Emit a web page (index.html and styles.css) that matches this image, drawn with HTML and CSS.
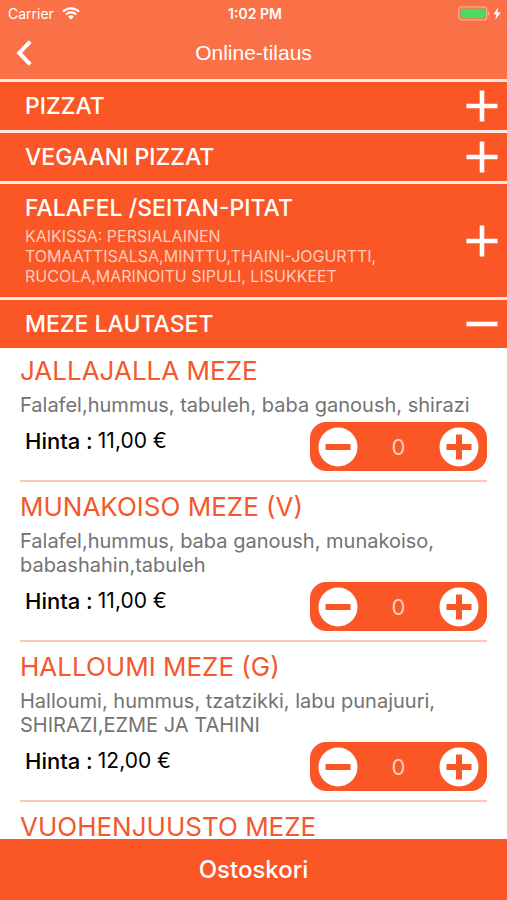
FILE: index.html
```html
<!DOCTYPE html>
<html lang="fi">
<head>
<meta charset="utf-8">
<meta name="viewport" content="width=device-width, initial-scale=1">
<title>Online-tilaus</title>
<link rel="stylesheet" href="styles.css">
</head>
<body>
<svg class="defs" aria-hidden="true">
  <symbol id="minus" viewBox="0 0 40 40"><circle cx="20" cy="20" r="19.5" fill="#fff"/><path d="M7.5 20h25" stroke="#fa5626" stroke-width="6"/></symbol>
  <symbol id="plus" viewBox="0 0 40 40"><circle cx="20" cy="20" r="19.5" fill="#fff"/><path d="M7.5 20h25M20 7.5v25" stroke="#fa5626" stroke-width="6"/></symbol>
  <symbol id="expand" viewBox="0 0 32 32"><path d="M.5 16h31M16 .5v31" stroke="#fff" stroke-width="4.6"/></symbol>
  <symbol id="collapse" viewBox="0 0 32 32"><path d="M.5 16h31" stroke="#fff" stroke-width="4.6"/></symbol>
</svg>
<header class="top">
  <div class="status">
    <div class="carrier">Carrier
      <svg class="wifi" viewBox="0 0 18 13" aria-hidden="true"><g fill="none" stroke="#fff" stroke-width="2.1"><path d="M1 4.6a11.5 11.5 0 0 1 16 0"/><path d="M3.8 7.5a7.5 7.5 0 0 1 10.4 0"/></g><path d="M9 12.6 6.1 9.7a4.2 4.2 0 0 1 5.8 0z" fill="#fff"/></svg>
    </div>
    <div class="clock">1:02 PM</div>
    <div class="power">
      <svg class="battery" viewBox="0 0 44 15" aria-hidden="true"><rect x=".7" y="1" width="28" height="13" rx="3" fill="none" stroke="#fcb59d" stroke-width="1.2"/><rect x="2.6" y="2.8" width="24.6" height="9.4" rx="1.4" fill="#4cd964"/><path d="M30.4 5.2c1.9.7 1.9 3.9 0 4.6z" fill="#fcb59d"/><path d="M40.2 1.6 35.4 8.3h3l-1.2 5.4L42.8 6.6h-3.4z" fill="#fff"/></svg>
    </div>
  </div>
  <nav class="nav">
    <button class="back" type="button" aria-label="Takaisin"><svg viewBox="0 0 16 26" aria-hidden="true"><path d="M14.2 1.6 3.2 13l11 11.4" fill="none" stroke="#fff" stroke-width="4"/></svg></button>
    <h1 class="title">Online-tilaus</h1>
  </nav>
</header>
<main class="menu">
  <button class="category" type="button"><span class="label"><span class="name">PIZZAT</span></span><svg class="toggle" aria-hidden="true"><use href="#expand"/></svg></button>
  <button class="category" type="button"><span class="label"><span class="name">VEGAANI PIZZAT</span></span><svg class="toggle" aria-hidden="true"><use href="#expand"/></svg></button>
  <button class="category" type="button"><span class="label"><span class="name">FALAFEL /SEITAN-PITAT</span><span class="note">KAIKISSA: PERSIALAINEN TOMAATTISALSA,MINTTU,THAINI-JOGURTTI, RUCOLA,MARINOITU SIPULI, LISUKKEET</span></span><svg class="toggle" aria-hidden="true"><use href="#expand"/></svg></button>
  <button class="category" type="button" aria-expanded="true"><span class="label"><span class="name">MEZE LAUTASET</span></span><svg class="toggle" aria-hidden="true"><use href="#collapse"/></svg></button>
  <section class="dishes">
    <article class="dish">
      <h2 class="dish-name">JALLAJALLA MEZE</h2>
      <p class="desc">Falafel,hummus, tabuleh, baba ganoush, shirazi</p>
      <div class="order">
        <p class="price"><span class="price-label">Hinta :</span><span>11,00 €</span></p>
        <div class="stepper"><button type="button" aria-label="Vähennä"><svg aria-hidden="true"><use href="#minus"/></svg></button><output>0</output><button type="button" aria-label="Lisää"><svg aria-hidden="true"><use href="#plus"/></svg></button></div>
      </div>
    </article>
    <article class="dish">
      <h2 class="dish-name">MUNAKOISO MEZE (V)</h2>
      <p class="desc">Falafel,hummus, baba ganoush, munakoiso, babashahin,tabuleh</p>
      <div class="order">
        <p class="price"><span class="price-label">Hinta :</span><span>11,00 €</span></p>
        <div class="stepper"><button type="button" aria-label="Vähennä"><svg aria-hidden="true"><use href="#minus"/></svg></button><output>0</output><button type="button" aria-label="Lisää"><svg aria-hidden="true"><use href="#plus"/></svg></button></div>
      </div>
    </article>
    <article class="dish">
      <h2 class="dish-name">HALLOUMI MEZE (G)</h2>
      <p class="desc">Halloumi, hummus, tzatzikki, labu punajuuri, SHIRAZI,EZME JA TAHINI</p>
      <div class="order">
        <p class="price"><span class="price-label">Hinta :</span><span>12,00 €</span></p>
        <div class="stepper"><button type="button" aria-label="Vähennä"><svg aria-hidden="true"><use href="#minus"/></svg></button><output>0</output><button type="button" aria-label="Lisää"><svg aria-hidden="true"><use href="#plus"/></svg></button></div>
      </div>
    </article>
    <article class="dish">
      <h2 class="dish-name">VUOHENJUUSTO MEZE</h2>
    </article>
  </section>
</main>
<button class="cart" type="button">Ostoskori</button>
</body>
</html>
```
FILE: styles.css
```css
* {
  box-sizing: border-box;
}

body {
  margin: 0;
  height: 100vh;
  display: flex;
  flex-direction: column;
  background: #fff;
  font-family: Inter, "Liberation Sans", sans-serif;
  overflow: hidden;
}

button {
  margin: 0;
  padding: 0;
  border: 0;
  background: none;
  color: inherit;
  font: inherit;
}

svg {
  display: block;
}

h1, h2, p {
  margin: 0;
  font-weight: 400;
}

.defs {
  position: absolute;
  width: 0;
  height: 0;
}

.top {
  flex: none;
  background: #fb7147;
  color: #fff;
}

.status {
  display: grid;
  grid-template-columns: 1fr auto 1fr;
  align-items: center;
  height: 26px;
  padding: 1px 5px 0 8px;
  font-size: 14px;
}

.carrier {
  display: flex;
  align-items: center;
  gap: 8px;
}

.wifi {
  width: 18px;
  height: 13px;
}

.clock {
  font-weight: 600;
}

.power {
  display: flex;
  justify-content: flex-end;
}

.battery {
  width: 44px;
  height: 15px;
}

.nav {
  display: grid;
  grid-template-columns: 48px 1fr 48px;
  align-items: center;
  height: 53px;
}

.back {
  width: 16px;
  height: 26px;
  margin-left: 16px;
}

.title {
  font-family: "Liberation Sans", sans-serif;
  font-size: 21px;
  text-align: center;
}

.menu {
  flex: 1;
  min-height: 0;
  overflow: hidden;
}

.category {
  display: flex;
  align-items: center;
  width: 100%;
  padding: 9px 9px 9px 25px;
  border-top: 3px solid #ffe9e1;
  background: #fa5626;
  color: #fff;
  text-align: left;
}

.label {
  flex: 1;
  display: flex;
  flex-direction: column;
}

.name {
  font-size: 23px;
  font-weight: 500;
  line-height: 30px;
}

.note {
  max-width: 370px;
  padding: 3px 0 2px;
  color: #fdcdbc;
  font-size: 16px;
  line-height: 20px;
}

.toggle {
  width: 32px;
  height: 32px;
  margin: -1px 0;
}

.dishes {
  padding: 0 20px;
}

.dish {
  padding: 13px 0 9px;
  border-bottom: 2px solid #fdc8b8;
}

.dish:first-child {
  padding-top: 11px;
}

.dish-name {
  color: #f4582c;
  font-size: 26px;
  line-height: 24px;
}

.desc {
  padding-top: 10px;
  color: #737373;
  font-size: 20px;
  line-height: 24px;
}

.order {
  display: flex;
  justify-content: space-between;
  margin-top: 5px;
}

.price {
  display: flex;
  gap: 5px;
  padding: 6px 0 0 5px;
  color: #000;
  font-size: 21px;
  line-height: 26px;
}

.price-label {
  font-size: 22px;
  font-weight: 500;
}

.stepper {
  display: flex;
  align-items: center;
  justify-content: space-between;
  width: 177px;
  height: 49px;
  padding: 0 8px;
  border-radius: 16px;
  background: #fa5626;
  color: #fdcdbc;
  font-size: 22px;
}

.stepper svg {
  width: 40px;
  height: 40px;
}

.cart {
  flex: none;
  height: 61px;
  background: #fa5626;
  color: #fff;
  font-size: 24px;
  font-weight: 500;
}
```
